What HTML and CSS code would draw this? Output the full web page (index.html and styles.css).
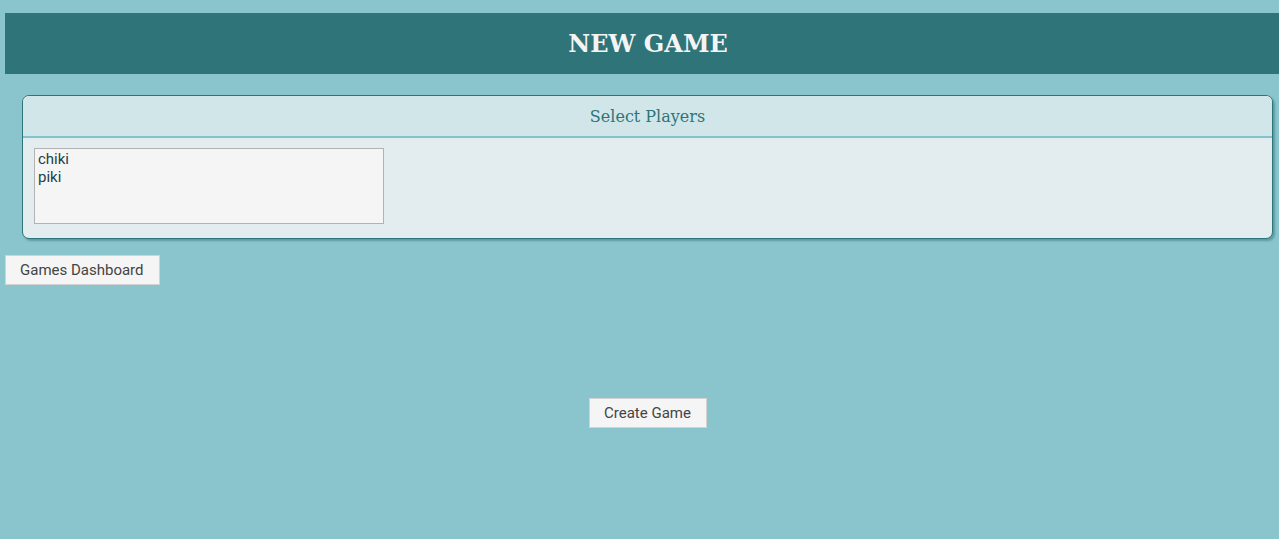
FILE: index.html
```html
<!DOCTYPE html>
<html>
<head>
<meta charset="utf-8">
<link rel="stylesheet" href="styles.css">
</head>
<body>
<header class="topbar"><h1 class="title">NEW GAME</h1></header>
<section class="panel">
  <div class="panel-head">Select Players</div>
  <div class="panel-body">
    <select class="players" multiple>
      <option>chiki</option>
      <option>piki</option>
    </select>
  </div>
</section>
<button class="btn">Games Dashboard</button>
<div class="create-row"><button class="btn">Create Game</button></div>
</body>
</html>
```
FILE: styles.css
```css
html, body { margin: 0; padding: 0; }
body {
  background: #8ac5cd;
  padding: 13px 0 0 5px;
  min-height: 539px;
  box-sizing: border-box;
  font-family: Roboto, "Liberation Sans", sans-serif;
}
.topbar {
  background: #2f7479;
  height: 61px;
  display: flex;
  align-items: center;
  justify-content: center;
  padding-left: 12px;
}
.title {
  margin: 0;
  color: #f4f4f4;
  font-family: "DejaVu Serif", serif;
  font-weight: bold;
  font-size: 24px;
}
.panel {
  margin: 21px 6px 0 17px;
  border: 1px solid #2f7479;
  border-radius: 7px;
  box-shadow: 2px 2px 2px rgba(47,116,121,0.5);
  overflow: hidden;
  background: #e3ecee;
}
.panel-head {
  background: #d1e6e9;
  height: 39px;
  padding-top: 1px;
  border-bottom: 2px solid #82c3ca;
  display: flex;
  align-items: center;
  justify-content: center;
  font-family: "DejaVu Serif", serif;
  font-size: 16px;
  color: #2f7479;
}
.panel-body {
  padding: 10px 11px 14px;
}
.players {
  display: block;
  width: 350px;
  height: 76px;
  box-sizing: border-box;
  background: #f5f5f5;
  border: 1px solid #b3b3b3;
  border-radius: 0;
  padding: 1px 0 0 2px;
  margin: 0;
  font-family: Roboto, sans-serif;
  font-size: 15px;
  color: #1f3f44;
  overflow: hidden;
  outline: none;
}
.players option { padding: 0 1px; }
.btn {
  margin: 16px 0 0 0;
  height: 30px;
  padding: 0 15px 0 14px;
  background: #f5f5f5;
  border: 1px solid #d3d3d3;
  border-radius: 0;
  font-family: Roboto, sans-serif;
  font-size: 15px;
  color: #444;
}
.create-row {
  display: flex;
  justify-content: center;
  padding-left: 12px;
  margin-top: 113px;
}
.create-row .btn { margin: 0; }
```
